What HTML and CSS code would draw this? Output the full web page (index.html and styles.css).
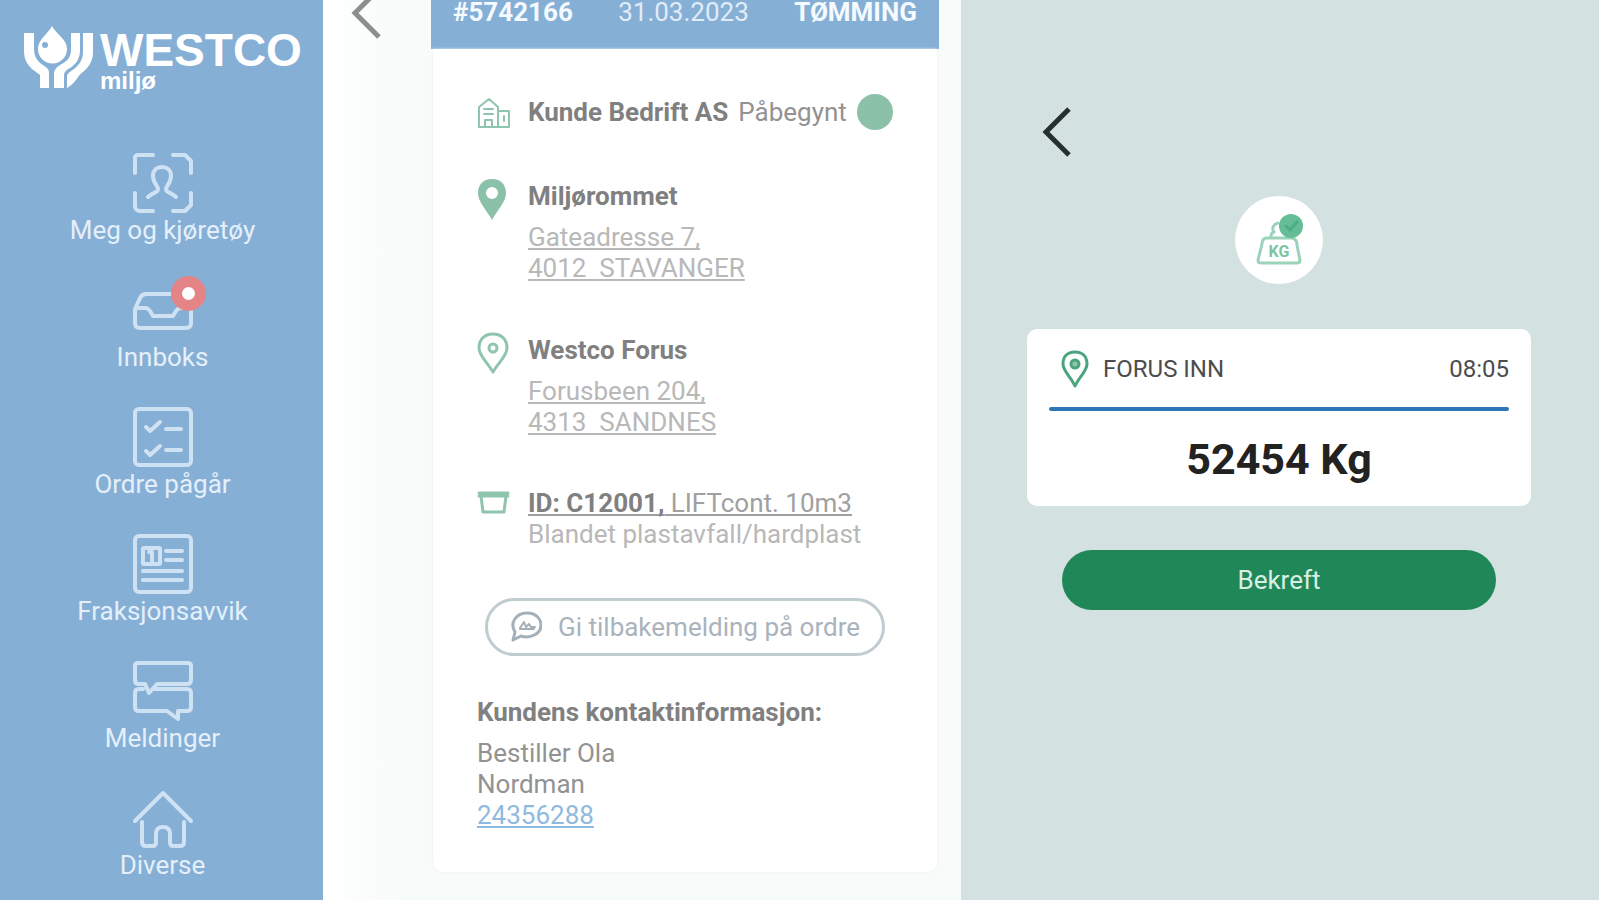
FILE: index.html
```html
<!DOCTYPE html>
<html lang="no">

<head>
    <meta charset="UTF-8">
    <meta name="viewport" content="width=device-width, initial-scale=1">
    <title>Westco miljø</title>

    <link rel="stylesheet" href="styles.css">
</head>

<body>
    <div class="app">
        <aside class="sidebar">
            <div class="logo">
                <svg class="logo-mark" width="70" height="64" viewBox="0 0 70 64" fill="#fff">
                    <path d="M0 7h10v16c0 8 4 13 9 16 4 3 6 4 6 8v15H16V49L8 43C3 38 0 33 0 25z" />
                    <path d="M28 0c4 8 15 13 15 23a14 14 0 0 1-29 0C14 13 24 8 28 0z" />
                    <circle cx="21" cy="19" r="3" fill="#86afd6" />
                    <path d="M47 7h9v17c0 9-4 14-10 18-4 2-6 4-6 7v13h-10V48c0-4 2-6 6-9 6-3 11-7 11-15z" />
                    <path d="M59 7h10v19c0 9-4 15-10 20-6 4-6 10-16 16V51c0-4 3-5 7-8 5-4 9-9 9-17z" />
                </svg>
                <div class="logo-text">
                    <div class="logo-name">WESTCO</div>
                    <div class="logo-sub">miljø</div>
                </div>
            </div>

            <nav class="menu">
                <a class="menu-item" href="#">
                    <svg class="menu-icon" viewBox="0 0 60 60">
                        <path d="M2 20V6a3 3 0 0 1 3-4h15M40 2h12l6 6v12M2 40v13a5 5 0 0 0 5 5h13M40 58h12l6-6V40" />
                        <path d="M15 44c5-5 10-4 10-8 0-3-5-6-5-13 0-6 4-9 9-9s9 3 9 9c0 7-5 10-5 13 0 4 5 3 10 8" />
                    </svg>
                    <span>Meg og kjøretøy</span>
                </a>
                <a class="menu-item" href="#">
                    <svg class="menu-icon" viewBox="0 0 60 60">
                        <path d="M13 14h34q5 0 6 4l5 11v14q0 5-5 5H7q-5 0-5-5V29l5-11q2-4 6-4z" />
                        <path d="M3 28h9q3 0 5 3l3 5h20l3-5q2-3 5-3h9" />
                    </svg>
                    <span class="badge"></span>
                    <span>Innboks</span>
                </a>
                <a class="menu-item" href="#">
                    <svg class="menu-icon" viewBox="0 0 60 60">
                        <rect x="2" y="2" width="56" height="56" rx="4" />
                        <path d="M13 20l4 4 10-9M33 22h15M13 44l4 4 10-9M33 43h15" />
                    </svg>
                    <span>Ordre pågår</span>
                </a>
                <a class="menu-item" href="#">
                    <svg class="menu-icon" viewBox="0 0 60 60">
                        <rect x="2" y="2" width="56" height="56" rx="4" />
                        <rect x="10" y="14" width="17" height="16" rx="1" />
                        <path d="M16 18h3v9M33 17h16M33 26h16M10 37h39M10 46h39" />
                    </svg>
                    <span>Fraksjonsavvik</span>
                </a>
                <a class="menu-item" href="#">
                    <svg class="menu-icon" viewBox="0 0 60 60">
                        <path d="M5 2h50q3 0 3 3v14q0 4-4 4H24l-8 9-4-9H6q-4 0-4-4V5q0-3 3-3z" />
                        <path d="M10 28H6q-4 0-4 4v14q0 4 4 4h28l11 8v-8h9q4 0 4-4V32q0-4-4-4H22" />
                    </svg>
                    <span>Meldinger</span>
                </a>
                <a class="menu-item" href="#">
                    <svg class="menu-icon" viewBox="0 0 60 60">
                        <path d="M2 33L30 5l28 28" />
                        <path d="M9 34v20q0 4 4 4h7q3 0 3-4v-8q0-7 7-7t7 7v8q0 4 3 4h7q4 0 4-4V34" />
                    </svg>
                    <span>Diverse</span>
                </a>
            </nav>
        </aside>

        <main class="order">
            <button class="back" type="button" aria-label="Tilbake">
                <svg width="36" height="60" viewBox="0 0 36 60">
                    <path d="M30 5L6 29l24 24" />
                </svg>
            </button>

            <article class="order-card">
                <header class="order-head">
                    <b>#5742166</b>
                    <span>31.03.2023</span>
                    <b>TØMMING</b>
                </header>

                <div class="order-body">
                    <section class="row">
                        <svg class="row-icon" width="34" height="36" viewBox="0 0 34 36">
                            <path d="M2 33V13l10-8 9 8v20zM21 17h11v16H21M8 33v-7h7v7M7 15h9M7 20h9M27 22v5" stroke-width="2" />
                        </svg>
                        <div class="customer">
                            <h2>Kunde Bedrift AS</h2>
                            <span>Påbegynt</span>
                            <i class="status"></i>
                        </div>
                    </section>

                    <section class="row">
                        <svg class="row-icon" width="34" height="42" viewBox="0 0 34 42">
                            <path class="solid" fill-rule="evenodd" d="M15 1C6 1 1 7 1 15c0 9 8 16 14 27 6-11 14-18 14-27C29 7 24 1 15 1zm0 8a6 6 0 1 1 0 12 6 6 0 0 1 0-12z" />
                        </svg>
                        <div>
                            <h2>Miljørommet</h2>
                            <a class="address" href="#">Gateadresse 7,<br>4012&nbsp; STAVANGER</a>
                        </div>
                    </section>

                    <section class="row">
                        <svg class="row-icon" width="34" height="42" viewBox="0 0 34 42">
                            <path d="M16 2C7 2 2 8 2 16c0 8 9 15 14 24 5-9 14-16 14-24C30 8 25 2 16 2z" />
                            <circle cx="16" cy="16" r="4" />
                        </svg>
                        <div>
                            <h2>Westco Forus</h2>
                            <a class="address" href="#">Forusbeen 204,<br>4313&nbsp; SANDNES</a>
                        </div>
                    </section>

                    <section class="row">
                        <svg class="row-icon" width="34" height="32" viewBox="0 0 34 32">
                            <path d="M2 7h29M2 10h29M4 10l2 16h21l2-16" stroke-width="3" />
                        </svg>
                        <div class="container-info">
                            <a class="container-id" href="#"><b>ID: C12001,</b> LIFTcont. 10m3</a>
                            <div>Blandet plastavfall/hardplast</div>
                        </div>
                    </section>

                    <button class="feedback" type="button">
                        <svg width="32" height="32" viewBox="0 0 32 32">
                            <path d="M3 29l2-8C-1 11 7 2 17 2c9 0 14 6 14 12 0 9-11 14-20 11z" />
                            <path d="M10 17l4-6 2 5 3-3 2 3h4M10 18h14" stroke-width="2" />
                        </svg>
                        <span>Gi tilbakemelding på ordre</span>
                    </button>

                    <section class="contact">
                        <h2>Kundens kontaktinformasjon:</h2>
                        <div>Bestiller Ola<br>Nordman</div>
                        <a href="tel:24356288">24356288</a>
                    </section>
                </div>
            </article>
        </main>

        <section class="weighing">
            <button class="back" type="button" aria-label="Tilbake">
                <svg width="36" height="60" viewBox="0 0 36 60">
                    <path d="M30 7L7 30l23 23" />
                </svg>
            </button>

            <div class="weight-icon">
                <svg width="50" height="52" viewBox="0 0 50 52">
                    <path d="M12 24h26q5 1 5 7l3 15q0 3-3 3H7q-3 0-3-3l4-16q0-5 4-6z" />
                    <path d="M17 22c0-3 1-3 3-4-3-4 0-8 4-9" />
                    <text x="25" y="43" text-anchor="middle">KG</text>
                    <circle cx="37" cy="12" r="12" />
                    <path class="tick" d="M32 12l4 4 7-8" />
                </svg>
            </div>

            <div class="weight-card">
                <div class="weight-place">
                    <svg width="28" height="38" viewBox="0 0 28 38">
                        <path d="M14 2C6 2 2 7 2 14c0 7 8 13 12 22 4-9 12-15 12-22C26 7 22 2 14 2z" />
                        <circle cx="14" cy="14" r="4" />
                    </svg>
                    <span>FORUS INN</span>
                    <time>08:05</time>
                </div>
                <div class="weight-value">52454 Kg</div>
            </div>

            <button class="confirm" type="button">Bekreft</button>
        </section>
    </div>
</body>

</html>
```

FILE: styles.css
```css
* {
    box-sizing: border-box;
}

body {
    margin: 0;
    font: 26px/31px Roboto, sans-serif;
    color: #929292;
}

a {
    color: inherit;
}

button {
    font: inherit;
    cursor: pointer;
}

svg {
    flex: none;
    fill: none;
    stroke-linecap: round;
    stroke-linejoin: round;
}

h2 {
    margin: 0;
    font-size: 26px;
    line-height: 36px;
    font-weight: 700;
    color: #808080;
}

.app {
    display: grid;
    grid-template-columns: 323px 1fr 1fr;
    height: 100vh;
    overflow: hidden;
}

/* sidebar */

.sidebar {
    padding-top: 26px;
    background: #86afd6;
    color: #e4effa;
}

.logo {
    display: flex;
    align-items: flex-end;
    gap: 6px;
    padding-left: 24px;
    color: #fff;
    font-family: "Liberation Sans", Arial, sans-serif;
    font-weight: 700;
}

.logo-mark {
    fill: #fff;
}

.logo-name {
    margin-bottom: 2px;
    font-size: 46px;
    line-height: 40px;
}

.logo-sub {
    font-size: 24px;
    line-height: 18px;
}

.menu {
    display: flex;
    flex-direction: column;
    gap: 33px;
    margin-top: 63px;
    padding-left: 2px;
}

.menu-item {
    position: relative;
    display: flex;
    flex-direction: column;
    align-items: center;
    line-height: 34px;
    text-decoration: none;
}

.menu-icon {
    width: 60px;
    height: 60px;
    stroke: #cfe2f4;
    stroke-width: 4;
}

.badge {
    position: absolute;
    top: -4px;
    left: 50%;
    width: 35px;
    height: 35px;
    margin-left: 8px;
    border: 11px solid #e58487;
    border-radius: 50%;
    background: #fff;
}

/* order */

.order {
    display: flex;
    align-items: flex-start;
    margin-top: -25px;
    padding-right: 22px;
    background: linear-gradient(to right, #fff, #f7fbfa 80px);
}

.back {
    display: block;
    padding: 0;
    border: none;
    background: none;
    text-align: left;
}

.back svg {
    display: block;
    stroke: #8b8e8d;
    stroke-width: 5;
    stroke-linecap: butt;
    stroke-linejoin: miter;
}

.order .back {
    width: 108px;
    padding: 9px 0 0 26px;
}

.order-card {
    flex: 1;
}

.order-head {
    display: flex;
    justify-content: space-between;
    align-items: center;
    height: 74px;
    padding: 0 22px;
    background: #86afd6;
    color: #e0ecf8;
}

.order-head b {
    color: #f5faff;
}

.order-body {
    display: flex;
    flex-direction: column;
    gap: 48px;
    margin: 0 2px;
    padding: 45px 41px 41px 44px;
    border-radius: 0 0 10px 10px;
    background: #fff;
    box-shadow: 0 0 3px #edf1f0;
}

.row {
    display: flex;
    gap: 17px;
}

.row-icon {
    stroke: #8fc5ac;
    stroke-width: 3;
}

.row-icon .solid {
    fill: #8bc1a8;
    stroke: none;
}

.customer {
    display: flex;
    align-items: center;
    gap: 10px;
    white-space: nowrap;
}

.status {
    width: 36px;
    height: 36px;
    border-radius: 50%;
    background: #8bc1a8;
}

.address {
    display: block;
    margin-top: 8px;
    color: #b8b8b8;
}

.address,
.container-id,
.contact a {
    text-decoration-thickness: 2px;
    text-underline-offset: 2px;
    text-decoration-skip-ink: none;
}

.container-info {
    padding-top: 2px;
    color: #b8b8b8;
    white-space: nowrap;
}

.container-id {
    color: #a0a0a0;
}

.container-id b {
    color: #808080;
}

.feedback {
    display: flex;
    align-items: center;
    justify-content: center;
    gap: 16px;
    height: 58px;
    margin: 0 11px 0 8px;
    padding: 0;
    border: 3px solid #c0cccf;
    border-radius: 29px;
    background: #fff;
    color: #a9b3bd;
    white-space: nowrap;
}

.feedback svg {
    stroke: #a3b0ba;
    stroke-width: 3;
}

.contact {
    margin-top: -10px;
}

.contact h2 {
    margin-bottom: 8px;
}

.contact a {
    color: #8fb9de;
}

/* weighing */

.weighing {
    display: flex;
    flex-direction: column;
    padding: 102px 68px 0 66px;
    background: #d3e1e0;
}

.weighing .back {
    align-self: flex-start;
    padding-left: 12px;
}

.weighing .back svg {
    stroke: #26302f;
}

.weight-icon {
    display: flex;
    align-items: center;
    justify-content: center;
    align-self: center;
    width: 88px;
    height: 88px;
    margin-top: 34px;
    border-radius: 50%;
    background: #fff;
}

.weight-icon svg {
    stroke: #9ad3b9;
    stroke-width: 3;
}

.weight-icon text {
    fill: #7cc5a4;
    stroke: none;
    font-size: 16px;
    font-weight: 700;
}

.weight-icon circle {
    fill: #64bd95;
    stroke: none;
}

.weight-icon .tick {
    stroke: #4dac82;
}

.weight-card {
    margin-top: 45px;
    padding: 21px 22px 22px;
    border-radius: 10px;
    background: #fff;
}

.weight-place {
    display: flex;
    align-items: center;
    gap: 14px;
    padding: 0 0 19px 12px;
    font-size: 24px;
    color: #4c4c4c;
}

.weight-place svg {
    stroke: #4ba47c;
    stroke-width: 3;
}

.weight-place circle {
    fill: #8fc5ac;
}

.weight-place time {
    margin-left: auto;
}

.weight-value {
    position: relative;
    padding-top: 27px;
    font-size: 43px;
    line-height: 50px;
    font-weight: 700;
    text-align: center;
    color: #222;
}

.weight-value::before {
    content: "";
    position: absolute;
    top: 0;
    left: 0;
    right: 0;
    height: 4px;
    border-radius: 2px;
    background: #2f76b8;
}

.confirm {
    height: 60px;
    margin: 44px 35px 0;
    padding: 0;
    border: none;
    border-radius: 30px;
    background: #208858;
    color: #d8efe3;
}
```
